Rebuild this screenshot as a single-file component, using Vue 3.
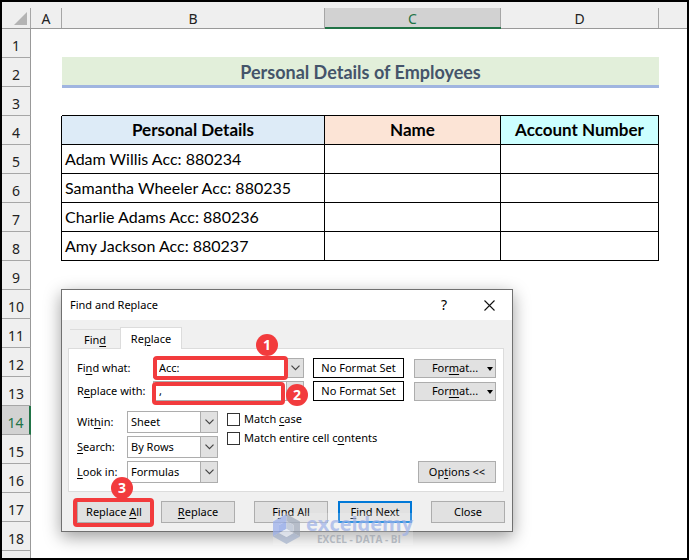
<script setup>
import { ref } from 'vue'

const selectedRow = 14
const people = [
  'Adam Willis Acc: 880234',
  'Samantha Wheeler Acc: 880235',
  'Charlie Adams Acc: 880236',
  'Amy Jackson Acc: 880237',
]
const blankRows = [9, 10, 11, 12, 13, 14, 15, 16, 17, 18]

const findText = ref('Acc:')
const replaceText = ref(',')
const matchCase = ref(false)
const matchEntire = ref(false)
</script>

<template>
  <main class="frame">
    <table class="sheet">
      <colgroup>
        <col class="w-head" /><col class="w-a" /><col class="w-b" /><col class="w-c" /><col class="w-d" /><col />
      </colgroup>
      <thead>
        <tr>
          <th class="corner"><span><svg width="13" height="13" viewBox="0 0 13 13" aria-hidden="true"><path d="M13 0V13H0Z" fill="#b4b4b4" /></svg></span></th>
          <th><span>A</span></th>
          <th><span>B</span></th>
          <th class="selected"><span>C</span></th>
          <th><span>D</span></th>
          <th class="last"><span></span></th>
        </tr>
      </thead>
      <tbody>
        <tr><th>1</th><td></td><td></td><td></td><td></td><td></td></tr>
        <tr><th>2</th><td></td><td colspan="3" class="title">Personal Details of Employees</td><td></td></tr>
        <tr><th>3</th><td></td><td class="under"></td><td class="under"></td><td class="under"></td><td></td></tr>
        <tr class="boxed heads">
          <th>4</th><td></td>
          <td class="blue">Personal Details</td><td class="peach">Name</td><td class="cyan">Account Number</td><td></td>
        </tr>
        <tr v-for="(p, i) in people" :key="p" class="boxed">
          <th>{{ i + 5 }}</th><td></td><td>{{ p }}</td><td></td><td></td><td></td>
        </tr>
        <tr v-for="n in blankRows" :key="n">
          <th :class="{ selected: n === selectedRow }">{{ n }}</th><td></td><td></td><td></td><td></td><td></td>
        </tr>
        <tr class="cut"><th></th><td colspan="5"></td></tr>
      </tbody>
    </table>

    <section class="dialog" role="dialog" aria-labelledby="dlg-title">
      <header class="titlebar">
        <h1 id="dlg-title">Find and Replace</h1>
        <button class="plain" type="button">?</button>
        <button class="plain" type="button" aria-label="Close dialog">
          <svg width="11" height="11" viewBox="0 0 11 11" aria-hidden="true"><path d="M.5.5l10 10M10.500.5l-10 10" stroke="#111" stroke-width="1.1" fill="none" /></svg>
        </button>
      </header>
      <div class="body">
        <nav class="tabs">
          <button type="button" class="tab">Fin<u>d</u></button>
          <button type="button" class="tab active">Re<u>p</u>lace</button>
        </nav>
        <div class="panel">
          <div class="field">
            <label for="find">Fi<u>n</u>d what:</label>
            <div class="combo">
              <input id="find" v-model="findText" type="text" />
              <button type="button" aria-label="Find history"><svg width="9" height="6" viewBox="0 0 9 6"><path d="M.5.7l4 4 4-4" /></svg></button>
            </div>
            <output>No Format Set</output>
            <button type="button" class="btn format"><span>For<u>m</u>at...</span><i></i></button>
          </div>
          <div class="field">
            <label for="replace">R<u>e</u>place with:</label>
            <div class="combo">
              <input id="replace" v-model="replaceText" type="text" />
              <button type="button" aria-label="Replace history"><svg width="9" height="6" viewBox="0 0 9 6"><path d="M.5.7l4 4 4-4" /></svg></button>
            </div>
            <output>No Format Set</output>
            <button type="button" class="btn format"><span>For<u>m</u>at...</span><i></i></button>
          </div>
          <div class="options">
            <div class="selects">
              <label for="within">Wit<u>h</u>in:</label>
              <div class="pick"><select id="within"><option>Sheet</option></select><span><svg width="9" height="6" viewBox="0 0 9 6"><path d="M.5.7l4 4 4-4" /></svg></span></div>
              <label for="search"><u>S</u>earch:</label>
              <div class="pick"><select id="search"><option>By Rows</option></select><span><svg width="9" height="6" viewBox="0 0 9 6"><path d="M.5.7l4 4 4-4" /></svg></span></div>
              <label for="look"><u>L</u>ook in:</label>
              <div class="pick"><select id="look"><option>Formulas</option></select><span><svg width="9" height="6" viewBox="0 0 9 6"><path d="M.5.7l4 4 4-4" /></svg></span></div>
            </div>
            <div class="checks">
              <label><input v-model="matchCase" type="checkbox" /><span>Match <u>c</u>ase</span></label>
              <label><input v-model="matchEntire" type="checkbox" /><span>Match entire cell c<u>o</u>ntents</span></label>
            </div>
            <button type="button" class="btn more">Op<u>t</u>ions &lt;&lt;</button>
          </div>
        </div>
        <footer class="actions">
          <div><button type="button" class="btn">Replace <u>A</u>ll</button><button type="button" class="btn"><u>R</u>eplace</button></div>
          <div><button type="button" class="btn">F<u>i</u>nd All</button><button type="button" class="btn primary"><u>F</u>ind Next</button></div>
          <button type="button" class="btn">Close</button>
        </footer>
      </div>

      <div class="mark mark-find"></div>
      <div class="mark mark-replace"></div>
      <div class="mark mark-all"></div>
      <span class="step step-1">1</span>
      <span class="step step-2">2</span>
      <span class="step step-3">3</span>

      <div class="brand">
        <svg width="27" height="30" viewBox="0 0 27 30" aria-hidden="true">
          <path d="M13.500 0L0 7.500v15L6 19v-8l7.500-4z" fill="#9db1ec" />
          <path d="M13.500 0L27 7.500v15L20.500 19v-8L13.500 7z" fill="#a3adbd" />
          <path d="M0 22.500L13.500 30 27 22.500 20.500 19l-7 4L6 19z" fill="#a9b6cf" />
          <path d="M13.500 7v8L6 19v-8z" fill="#8ea6ea" />
          <path d="M13.500 7l7 4v8l-7-4z" fill="#b9c3d4" />
          <path d="M13.500 15l7 4-7 4L6 19z" fill="#e6ecf8" />
        </svg>
        <div><strong>exceldemy</strong><small>EXCEL - DATA - BI</small></div>
      </div>
    </section>
  </main>
</template>

<style>
body { margin: 0; background: #fff; }
</style>

<style scoped>
* { box-sizing: border-box; }
.frame { position: relative; border: 2px solid #000; overflow: hidden; background: #fff; }

.sheet { width: 100%; table-layout: fixed; border-collapse: separate; border-spacing: 0; font: 16px/20px Lato, sans-serif; color: #000; }
.w-head { width: 29px; }
.w-a { width: 31px; }
.w-b { width: 263px; }
.w-c { width: 176px; }
.w-d { width: 158px; }
.sheet th { font: 14px/20px "Noto Sans", sans-serif; color: #222; background: #efefef; }
.sheet thead th { height: 27px; padding: 6px 0 0; border-bottom: 1px solid #999; vertical-align: top; }
.sheet thead span { display: block; height: 20px; line-height: 21px; border-right: 1px solid #a6a6a6; }
.sheet thead .last span { border-right: 0; }
.sheet thead .selected { border-bottom: 2px solid #217346; background: linear-gradient(#efefef 6px, #d2d2d2 6px); color: #217346; }
.sheet thead .selected span { height: 19px; }
.sheet .corner span { padding: 4px 0 0 12px; }
.corner svg { display: block; }
.sheet tbody th { height: 29px; padding: 6px 0 0; border-right: 1px solid #999; border-bottom: 1px solid #a6a6a6; }
.sheet tbody th.selected { background: #d2d2d2; color: #217346; border-right: 2px solid #217346; }
.sheet td { padding: 0 3px; white-space: nowrap; }
.sheet .title { background: #e2efda; color: #44546a; font-size: 18px; font-weight: 700; text-align: center; border-bottom: 2px solid #a0b5e0; box-shadow: 0 1px #a0b5e0, 0 -1px #e2efda; }
.under { border-bottom: 1px solid #000; }
.boxed td { border-right: 1px solid #000; border-bottom: 1px solid #000; }
.boxed td:nth-child(2) { border-bottom: 0; }
.boxed td:last-child { border: 0; }
.heads td { font-size: 17px; font-weight: 700; text-align: center; }
.blue { background: #ddebf7; }
.peach { background: #fce4d6; }
.cyan { background: #ccffff; }
.sheet .cut th { height: 7px; padding: 0; border-bottom: 0; }

.dialog { position: absolute; left: 59px; top: 287px; width: 452px; border: 1px solid #707070; background: #f0f0f0; box-shadow: 0 5px 16px rgba(0, 0, 0, .38); font: 11px/16px "Noto Sans", sans-serif; color: #000; }
.dialog button, .dialog input, .dialog select { font: inherit; color: inherit; margin: 0; }
.dialog u { text-underline-offset: 2px; }
.titlebar { display: flex; align-items: center; height: 30px; padding: 0 9px 0 8px; background: #fff; }
.titlebar h1 { flex: 1; margin: 0; font: inherit; }
.plain { display: grid; place-items: center; width: 28px; height: 28px; padding: 0; border: 0; background: none; }
.plain + .plain { margin-left: 17px; }
.titlebar .plain { font-size: 14px; }
.body { padding: 7px 7px 8px 6px; }
.tabs { display: flex; align-items: flex-end; padding-left: 2px; }
.tab { width: 50px; height: 19px; margin-bottom: 1px; padding: 2px 0 0; border: 0; border-top: 1px solid #dcdcdc; background: #f0f0f0; }
.dialog .tab.active { position: relative; width: 62px; height: 22px; margin-bottom: -1px; padding: 1px 0 0; border: 1px solid #dcdcdc; border-bottom: 0; background: #fff; }
.panel { margin-right: 1px; padding: 9px 7px 8px 8px; border: 1px solid #dcdcdc; background: #fff; }
.field { display: flex; align-items: center; height: 20px; margin-bottom: 3px; }
.field label { flex: none; width: 76px; white-space: nowrap; }
.combo { display: flex; flex: 1; min-width: 0; height: 20px; border: 1px solid #adadad; background: #fff; }
.combo input { flex: 1; width: 0; min-width: 0; padding: 0 5px; border: 0; background: none; outline: 0; }
.combo button { flex: none; width: 17px; padding: 0; border: 0; border-left: 1px solid #adadad; background: #e1e1e1; display: grid; place-items: center; }
.combo path, .pick path { fill: none; stroke: #444; stroke-width: 1.2; }
.field output { flex: none; width: 91px; height: 20px; margin: 0 10px 0 9px; border: 1px solid #000; text-align: center; line-height: 18px; white-space: nowrap; }
.btn { flex: none; height: 22px; width: 74px; padding: 0; border: 1px solid #adadad; background: #e1e1e1; white-space: nowrap; }
.format { position: relative; width: 82px; height: 19px; }
.format i { position: absolute; right: 2px; top: 7px; border: 3px solid transparent; border-top: 4px solid #000; border-bottom: 0; }
.options { display: flex; padding-top: 7px; }
.selects { display: grid; grid-template-columns: 50px 91px; row-gap: 3px; align-items: center; }
.pick { position: relative; height: 22px; }
.pick select { width: 100%; height: 100%; padding: 0 3px; border: 1px solid #adadad; border-radius: 0; background: #fff; appearance: none; outline: 0; }
.pick span { position: absolute; right: 0; top: 0; bottom: 0; width: 18px; display: grid; place-items: center; border: 1px solid #adadad; background: #e1e1e1; pointer-events: none; }
.checks { flex: 1; display: flex; flex-direction: column; gap: 3px; padding-left: 9px; white-space: nowrap; }
.checks label { display: flex; align-items: center; gap: 4px; height: 16px; }
.checks input { appearance: none; width: 13px; height: 13px; border: 1px solid #333; background: #fff; }
.more { align-self: flex-end; width: 78px; margin-bottom: 1px; }
.actions { display: flex; justify-content: space-between; margin: 9px 0 0 9px; }
.actions div { display: flex; gap: 10px; }
.primary { border: 2px solid #0078d7; }

.mark { position: absolute; border: 4px solid #f23b3d; border-radius: 4px; pointer-events: none; }
.mark-find { left: 91px; top: 66px; width: 135px; height: 24px; }
.mark-replace { left: 90px; top: 92px; width: 133px; height: 23px; }
.mark-all { left: 11px; top: 208px; width: 81px; height: 29px; }
.step { position: absolute; width: 22px; height: 22px; border-radius: 50%; background: #f23b3d; color: #fff; text-align: center; font: 700 14px/22px "Noto Sans", sans-serif; }
.step-1 { left: 194px; top: 44px; }
.step-2 { left: 224px; top: 94px; }
.step-3 { left: 49px; top: 187px; }
.brand { position: absolute; left: 211px; top: 223px; display: flex; align-items: center; gap: 6px; height: 32px; background: rgba(255, 255, 255, .25); opacity: .75; pointer-events: none; white-space: nowrap; }
.brand strong { display: block; font: 700 20px/20px "Open Sans", sans-serif; color: #a3b6ea; }
.brand small { display: block; padding-left: 11px; font: 700 10px/10px "Open Sans", sans-serif; color: #a3a9b3; }
</style>
